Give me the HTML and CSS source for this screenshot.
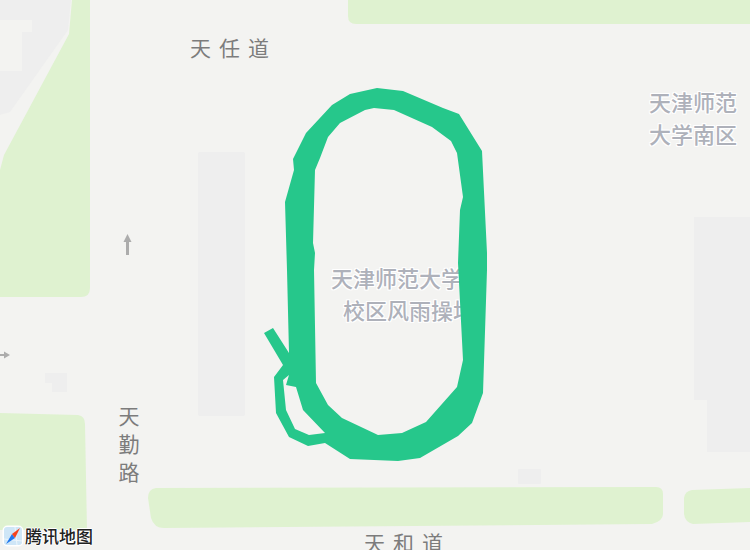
FILE: index.html
```html
<!DOCTYPE html>
<html lang="zh">
<head>
<meta charset="utf-8">
<title>腾讯地图</title>
<link rel="stylesheet" href="styles.css">
</head>
<body>
<div class="map">
  <svg class="layer" viewBox="0 0 750 550" width="750" height="550">
    <g class="building">
      <path d="M0 0H71L68 30 10 112 0 115V71H22V32H32V20H0Z"/>
      <rect x="198" y="152" width="47" height="264" rx="2"/>
      <path d="M694 217H750V452H707V400H694Z"/>
      <path d="M45 373H67V392H52V383H45Z"/>
      <rect x="518" y="469" width="23" height="15" rx="1"/>
    </g>
    <g class="park">
      <path d="M72 0H90V288Q90 297 81 297H0V170L4 155 69 34Z"/>
      <path d="M348 0H750V24H356Q348 24 348 16Z"/>
      <path d="M0 413L78 415Q85 416 85 424L87 530H0Z"/>
      <path d="M156 488L656 487Q663 487 663 494V514Q663 521 652 524L164 528Q154 528 151 518L148 498Q148 489 156 488Z"/>
      <path d="M692 490L750 488V522L693 524Q685 522 684 514V498Q685 491 692 490Z"/>
    </g>
    <g class="arrow">
      <path d="M126 240H129V255H126Z"/>
      <path d="M127.500 234L131.500 242H123.500Z"/>
      <path d="M0 354H5V356H0Z"/>
      <path d="M10 355L4 351.500V358.500Z"/>
    </g>
  </svg>

  <span class="road road-ren">天任道</span>
  <span class="road road-qin">天勤路</span>
  <span class="road road-he">天和道</span>
  <span class="poi poi-south">天津师范<br>大学南区</span>
  <span class="poi poi-field">天津师范大学<br><span class="poi-indent">校区风雨操场</span></span>

  <svg class="layer" viewBox="0 0 750 550" width="750" height="550">
    <path class="track" fill-rule="evenodd" d="M377 88L403 91 443 108 459 114 482 151 487 253 487 270 483 393 472 423 458 436 420 458 398 461 350 459 325 443 308 446 289 437 276 413 274 377 283 365 264 333 273 328 289 353 287 270 285 202 294 170 293 159 306 133 332 105 350 94Z
    M374 108L394 110 432 127 451 141 457 153 463 197 460 210 458 263 463 360 457 387 426 422 402 433 378 435 342 418 328 405 316 383 314 270 315 253 313 243 315 170 320 158 328 137 340 123 365 110Z
    M283 380L289 375 286 385 296 387 303 410 325 433 309 435 295 429 286 410Z"/>
  </svg>

  <div class="brand">
    <svg class="brand-icon" viewBox="0 0 22 22" width="22" height="22">
      <rect class="brand-bg" x="0.500" y="0.500" width="21" height="21" rx="5"/>
      <rect class="brand-sky" x="2" y="2" width="18" height="18" rx="3"/>
      <path class="brand-grid" d="M2 14L20 16M13 2L15 20"/>
      <path class="brand-blue" d="M4 19L10 9 13 13Z"/>
      <path class="brand-red" d="M18 3L10 9 13 13Z"/>
    </svg>
    <span class="brand-name">腾讯地图</span>
  </div>
</div>
</body>
</html>
```

FILE: styles.css
```css
* { box-sizing: border-box; }
html, body { margin: 0; padding: 0; }
body { background: #f3f3f1; font-family: "Noto Sans CJK SC", "Noto Sans", sans-serif; }

.map {
  position: relative;
  width: 750px;
  height: 550px;
  overflow: hidden;
  background: #f3f3f1;
}
.layer { position: absolute; left: 0; top: 0; display: block; }

.building path, .building rect { fill: #eeeeee; }
.park path { fill: #dff2d0; }
.arrow path { fill: #acacac; }
.track { fill: #26c78b; }

.road {
  position: absolute;
  color: #7c7c7c;
  font-size: 21px;
  font-weight: 400;
  line-height: 21px;
  letter-spacing: 8px;
  white-space: nowrap;
}
.road-ren { left: 190px; top: 37px; }
.road-he { left: 364px; top: 532px; }
.road-qin {
  left: 118px;
  top: 406px;
  writing-mode: vertical-rl;
  letter-spacing: 7px;
}

.poi {
  position: absolute;
  color: #aeb1ba;
  font-size: 22px;
  font-weight: 500;
  line-height: 32px;
  white-space: nowrap;
  text-shadow: -1px 0 #fff, 1px 0 #fff, 0 -1px #fff, 0 1px #fff, -1px -1px #fff, 1px 1px #fff, -1px 1px #fff, 1px -1px #fff;
}
.poi-south { left: 649px; top: 85px; }
.poi-field { left: 331px; top: 261px; }
.poi-indent { margin-left: 12px; }

.brand {
  position: absolute;
  left: 2px;
  top: 525px;
  display: flex;
  align-items: center;
  gap: 1px;
  height: 22px;
}
.brand-icon { display: block; }
.brand-bg { fill: #ffffff; }
.brand-sky { fill: #cfe6f7; }
.brand-grid { fill: none; stroke: #eef6fc; stroke-width: 1; }
.brand-blue { fill: #1f78ee; }
.brand-red { fill: #f5431c; }
.brand-name {
  color: #222222;
  font-size: 17px;
  font-weight: 500;
  line-height: 22px;
  white-space: nowrap;
  text-shadow: -1px 0 #fff, 1px 0 #fff, 0 -1px #fff, 0 1px #fff;
}
```
